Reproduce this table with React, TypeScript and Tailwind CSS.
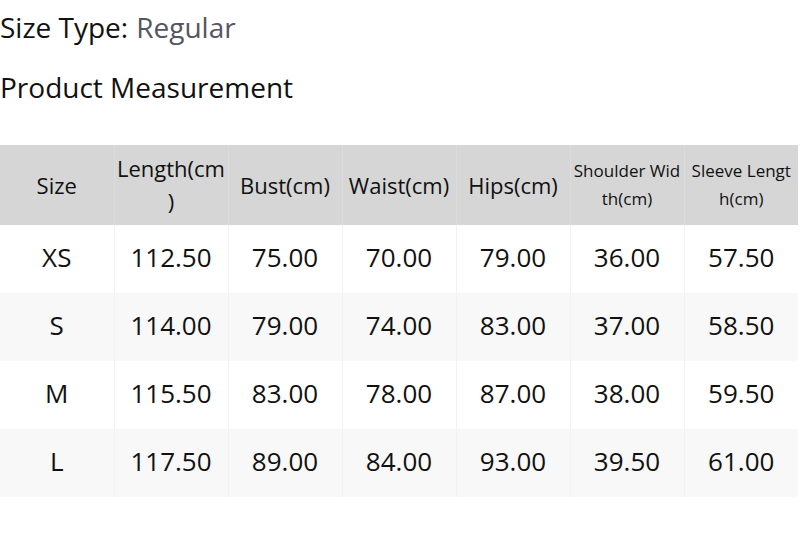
const headers: { lines: string[]; size: string }[] = [
  { lines: ["Size"], size: "text-[22px] leading-[33px]" },
  { lines: ["Length(cm", ")"], size: "text-[22px] leading-[33px]" },
  { lines: ["Bust(cm)"], size: "text-[22px] leading-[33px]" },
  { lines: ["Waist(cm)"], size: "text-[22px] leading-[33px]" },
  { lines: ["Hips(cm)"], size: "text-[22px] leading-[33px]" },
  { lines: ["Shoulder Wid", "th(cm)"], size: "text-[17px] leading-[28px]" },
  { lines: ["Sleeve Lengt", "h(cm)"], size: "text-[17px] leading-[28px]" },
]

const rows = [
  ["XS", "112.50", "75.00", "70.00", "79.00", "36.00", "57.50"],
  ["S", "114.00", "79.00", "74.00", "83.00", "37.00", "58.50"],
  ["M", "115.50", "83.00", "78.00", "87.00", "38.00", "59.50"],
  ["L", "117.50", "89.00", "84.00", "93.00", "39.50", "61.00"],
]

export default function App() {
  return (
    <div className="h-[558px] w-[800px] bg-white text-[#111] [font-family:'Open_Sans',sans-serif]">
      <div className="flex h-[54px] items-center text-[28px]">
        <span>Size Type:</span>
        <span className="ml-2 text-[#55555f]">Regular</span>
      </div>
      <div className="flex h-[65px] items-center text-[28px]">Product Measurement</div>
      <table className="mt-[26px] w-[798px] table-fixed border-collapse text-center">
        <thead>
          <tr className="h-[80px] bg-[#d6d6d6]">
            {headers.map((h) => (
              <th
                key={h.lines[0]}
                className={`whitespace-nowrap border-r border-[#dcdcdc] px-0 font-normal last:border-r-0 ${h.size}`}
              >
                {h.lines.map((l) => (
                  <div key={l}>{l}</div>
                ))}
              </th>
            ))}
          </tr>
        </thead>
        <tbody>
          {rows.map((r, i) => (
            <tr key={r[0]} className={`h-[68px] ${i % 2 === 1 ? "bg-[#f8f8f8]" : "bg-white"}`}>
              {r.map((c, j) => (
                <td key={j} className="border-r border-[#f2f2f2] pb-[3px] text-[26px] last:border-r-0">
                  {c}
                </td>
              ))}
            </tr>
          ))}
        </tbody>
      </table>
    </div>
  )
}
